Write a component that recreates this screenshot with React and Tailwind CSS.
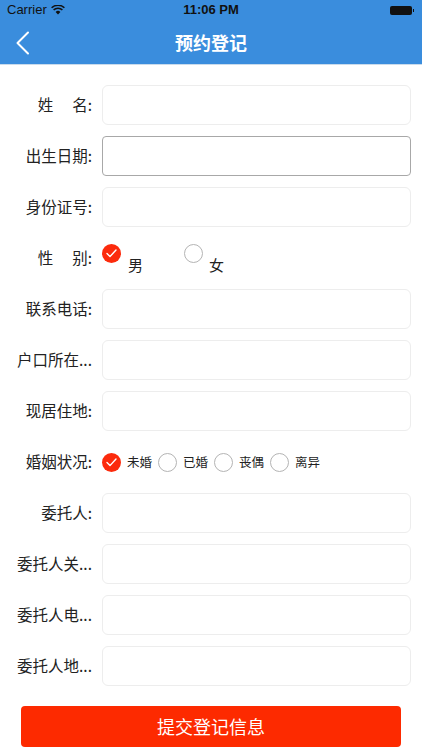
import React from "react";

const font = { fontFamily: '"Noto Sans CJK SC", "Noto Sans", sans-serif' };

function Check({ on }) {
  if (on) {
    return (
      <span className="flex h-[19px] w-[19px] shrink-0 items-center justify-center rounded-full bg-[#fc2a0c]">
        <svg width="11" height="9" viewBox="0 0 11 9" fill="none">
          <path d="M1 4.6 L4 7.6 L10 1" stroke="white" strokeWidth="1.4" strokeLinecap="round" strokeLinejoin="round" />
        </svg>
      </span>
    );
  }
  return <span className="block h-[19px] w-[19px] shrink-0 rounded-full border border-[#b4b4b4] bg-white" />;
}

function Label({ children }) {
  return (
    <div className="flex w-[80px] shrink-0 justify-end text-[15.5px] leading-none text-[#222] whitespace-nowrap">
      {children}
    </div>
  );
}

function InputRow({ label, focused }) {
  return (
    <div className="flex h-[40px] items-center gap-[10px]">
      <Label>{label}</Label>
      <div
        className={
          focused
            ? "h-[40px] flex-1 rounded-[4px] border border-[#a8a8a8] bg-white"
            : "h-[40px] flex-1 rounded-[6px] border border-[#ededed] bg-white"
        }
      />
    </div>
  );
}

export default function App() {
  return (
    <div className="flex h-[750px] w-[422px] flex-col overflow-hidden bg-white" style={font}>
      <div className="bg-[#3a8ddd]">
        <div className="relative flex h-[20px] items-center px-[7px] text-[13px] text-[#111]" style={{ fontFamily: '"Liberation Sans", sans-serif' }}>
          <div className="flex items-center gap-[4px]">
            <span>Carrier</span>
            <svg width="14" height="10" viewBox="0 0 14 10">
              <path d="M7 9.6 L4.6 6.9 A3.5 3.5 0 0 1 9.4 6.9 Z" fill="#111" />
              <path d="M2.6 4.9 A6.4 6.4 0 0 1 11.4 4.9" stroke="#111" strokeWidth="1.5" fill="none" />
              <path d="M0.6 2.8 A9.2 9.2 0 0 1 13.4 2.8" stroke="#111" strokeWidth="1.5" fill="none" />
            </svg>
          </div>
          <div className="absolute left-0 right-0 text-center font-semibold">11:06 PM</div>
          <div className="ml-auto flex items-center mr-[1px]">
            <span className="h-[9px] w-[22px] rounded-[2px] bg-[#111]" />
            <span className="ml-[1px] h-[3px] w-[1.5px] bg-[#111]" />
          </div>
        </div>
        <div className="relative flex h-[44px] items-center justify-center">
          <svg className="absolute left-[15px] top-[11px]" width="16" height="24" viewBox="0 0 16 24" fill="none">
            <path d="M13 1.5 L2.5 12 L13 22.5" stroke="white" strokeWidth="2" strokeLinecap="round" strokeLinejoin="round" />
          </svg>
          <div className="text-[18px] font-bold text-white">预约登记</div>
        </div>
        <div className="h-[1px] bg-[#c9dbec]" />
      </div>

      <div className="mt-[20px] flex flex-col gap-[11px] pl-[12px] pr-[11px]">
        <InputRow label={<><span>姓</span><span className="ml-[19px]">名:</span></>} />
        <InputRow label="出生日期:" focused />
        <InputRow label="身份证号:" />
        <div className="flex h-[40px] items-center gap-[10px]">
          <Label><span>性</span><span className="ml-[19px]">别:</span></Label>
          <div className="flex items-center">
            <div className="flex items-start">
              <span className="mt-[-1px] flex"><Check on /></span>
              <span className="ml-[7px] mt-[12px] text-[15px] leading-none text-[#222]">男</span>
            </div>
            <div className="ml-[41px] flex items-start">
              <span className="mt-[-1px] flex"><Check /></span>
              <span className="ml-[6px] mt-[12px] text-[15px] leading-none text-[#222]">女</span>
            </div>
          </div>
        </div>
        <InputRow label="联系电话:" />
        <InputRow label="户口所在..." />
        <InputRow label="现居住地:" />
        <div className="flex h-[40px] items-center gap-[10px]">
          <Label>婚姻状况:</Label>
          <div className="flex items-center text-[12.5px] leading-none text-[#222]">
            <Check on />
            <span className="ml-[6px] w-[25px]">未婚</span>
            <span className="ml-[6px] flex"><Check /></span>
            <span className="ml-[6px] w-[25px]">已婚</span>
            <span className="ml-[6px] flex"><Check /></span>
            <span className="ml-[6px] w-[25px]">丧偶</span>
            <span className="ml-[6px] flex"><Check /></span>
            <span className="ml-[6px] w-[25px]">离异</span>
          </div>
        </div>
        <InputRow label="委托人:" />
        <InputRow label="委托人关..." />
        <InputRow label="委托人电..." />
        <InputRow label="委托人地..." />
      </div>

      <div className="mt-[20px] px-[21px]">
        <div className="flex h-[41px] w-[380px] items-center justify-center rounded-[4px] bg-[#fd2a00] text-[18px] text-white">
          提交登记信息
        </div>
      </div>
    </div>
  );
}
